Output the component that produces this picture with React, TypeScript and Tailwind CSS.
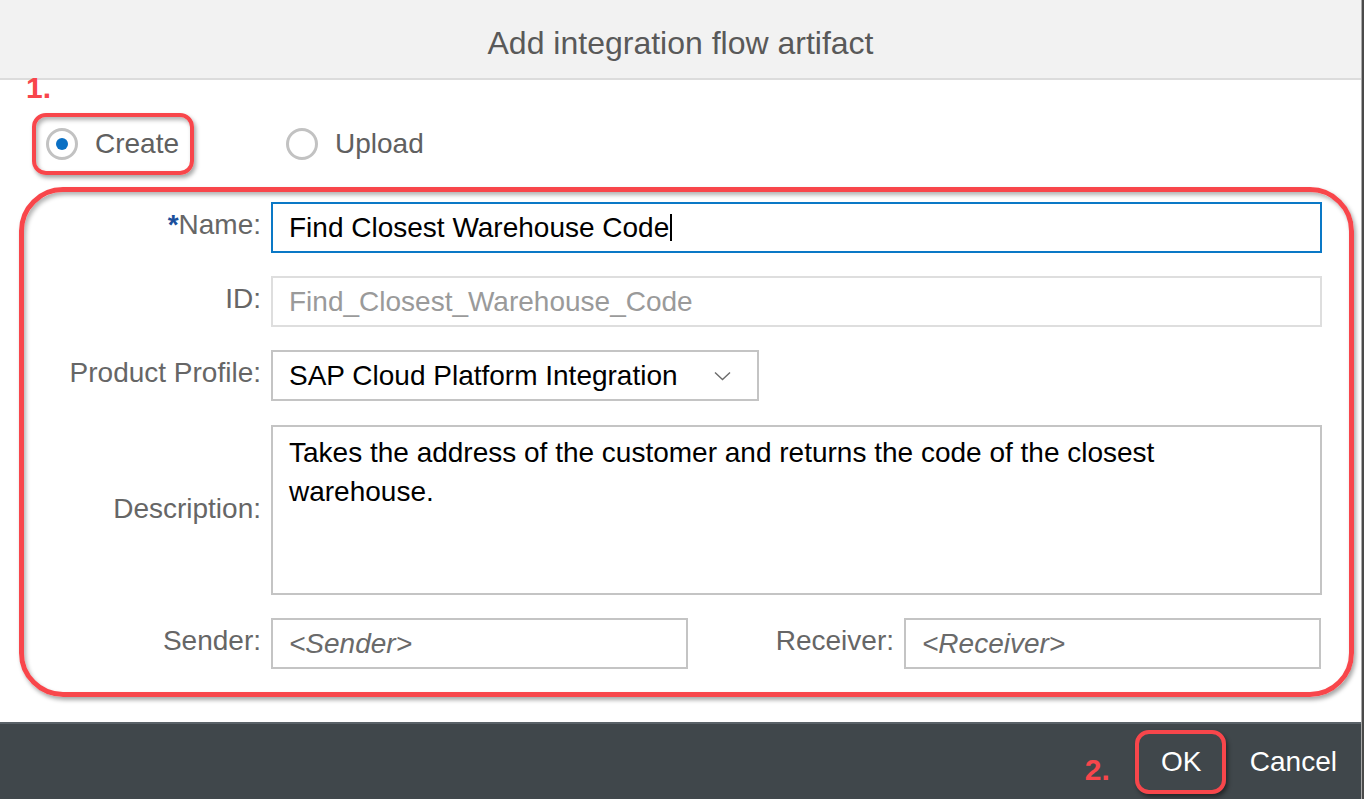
import React from "react";

const RED = "border-[#f8464b]";

function Radio({ checked }: { checked?: boolean }) {
  return (
    <span className="flex h-[32px] w-[32px] shrink-0 items-center justify-center rounded-full border-[3px] border-[#c2c2c2] bg-white">
      {checked && <span className="h-[12px] w-[12px] rounded-full bg-[#0a70c4]" />}
    </span>
  );
}

export default function App() {
  return (
    <div
      className="flex h-[799px] w-[1365px] overflow-hidden bg-white"
      style={{ fontFamily: '"Liberation Sans", Arial, sans-serif' }}
    >
      <div className="flex w-[1362px] flex-col border-r border-[#a8a8a8]">
        {/* Header */}
        <div className="flex h-[80px] shrink-0 items-center justify-center border-b-2 border-[#dcdcdc] bg-[#f2f2f2] pt-[8px]">
          <span className="text-[32px] text-[#595959]">Add integration flow artifact</span>
        </div>

        {/* Body */}
        <div className="relative flex flex-1 flex-col bg-white">
          <span className="absolute left-[26px] top-[-10px] text-[30px] font-bold leading-[36px] text-[#f8464b]">1.</span>

          {/* Radio row */}
          <div className="mt-[33px] flex h-[62px] items-center">
            <div
              className={`ml-[32px] flex h-[62px] w-[162px] items-center gap-[17px] rounded-[14px] border-4 ${RED} pl-[10px] shadow-[2px_3px_4px_rgba(0,0,0,0.35),inset_2px_3px_4px_rgba(0,0,0,0.3)]`}
            >
              <Radio checked />
              <span className="text-[28px] text-[#606060]">Create</span>
            </div>
            <div className="ml-[92px] flex items-center gap-[17px]">
              <Radio />
              <span className="text-[28px] text-[#606060]">Upload</span>
            </div>
          </div>

          {/* Form box */}
          <div
            className={`ml-[19px] mt-[12px] flex h-[510px] w-[1335px] flex-col rounded-[44px] border-[5px] ${RED} pt-[10px] shadow-[2px_3px_4px_rgba(0,0,0,0.35),inset_2px_3px_4px_rgba(0,0,0,0.3)]`}
          >
            {/* Name */}
            <div className="flex h-[51px] items-center">
              <div className="w-[237px] pb-[6px] text-right text-[28px] text-[#666]">
                <span className="font-bold text-[#1b4f9c]">*</span>Name:
              </div>
              <div className="ml-[10px] flex h-[51px] w-[1051px] items-center border-2 border-[#0a78c6] pl-[16px] text-[28px] text-black">
                Find Closest Warehouse Code
                <span className="ml-[1px] h-[27px] w-[2px] bg-black" />
              </div>
            </div>

            {/* ID */}
            <div className="mt-[23px] flex h-[51px] items-center">
              <div className="w-[237px] pb-[6px] text-right text-[28px] text-[#666]">ID:</div>
              <div className="ml-[10px] flex h-[51px] w-[1051px] items-center border-2 border-[#dedede] pl-[16px] text-[28px] text-[#9a9a9a]">
                Find_Closest_Warehouse_Code
              </div>
            </div>

            {/* Product profile */}
            <div className="mt-[23px] flex h-[51px] items-center">
              <div className="w-[237px] pb-[6px] text-right text-[28px] text-[#666]">Product Profile:</div>
              <div className="ml-[10px] flex h-[51px] w-[488px] items-center justify-between border-2 border-[#c4c4c4] pl-[16px] pr-[26px] text-[28px] text-black">
                <span>SAP Cloud Platform Integration</span>
                <svg width="17" height="10" viewBox="0 0 17 10" fill="none">
                  <path d="M1 1.5 L8.5 8.5 L16 1.5" stroke="#6b6b6b" strokeWidth="1.4" />
                </svg>
              </div>
            </div>

            {/* Description */}
            <div className="mt-[24px] flex h-[170px] items-center">
              <div className="w-[237px] pb-[2px] text-right text-[28px] text-[#666]">Description:</div>
              <div className="ml-[10px] h-[170px] w-[1051px] self-start border-2 border-[#c4c4c4] pl-[16px] pt-[6px] text-[28px] leading-[39px] text-black">
                Takes the address of the customer and returns the code of the closest
                <br />
                warehouse.
              </div>
            </div>

            {/* Sender / Receiver */}
            <div className="mt-[23px] flex h-[51px] items-center pr-[28px]">
              <div className="w-[237px] pb-[6px] text-right text-[28px] text-[#666]">Sender:</div>
              <div className="ml-[10px] flex h-[51px] w-[417px] items-center border-2 border-[#c4c4c4] pl-[16px] text-[28px] italic text-[#6a6a6a]">
                &lt;Sender&gt;
              </div>
              <div className="flex-1 pb-[6px] text-right text-[28px] text-[#666]">Receiver:</div>
              <div className="ml-[10px] flex h-[51px] w-[417px] items-center border-2 border-[#c4c4c4] pl-[16px] text-[28px] italic text-[#6a6a6a]">
                &lt;Receiver&gt;
              </div>
            </div>
          </div>
        </div>

        {/* Footer */}
        <div className="flex h-[77px] shrink-0 items-center justify-end border-t-2 border-[#5a6268] bg-[#40474b] pr-[24px]">
          <span className="mr-[25px] mt-[16px] text-[30px] font-bold text-[#f8464b]">2.</span>
          <div
            className={`flex h-[64px] w-[91px] items-center justify-center rounded-[14px] border-4 ${RED} pl-[2px] shadow-[2px_3px_4px_rgba(0,0,0,0.45)]`}
          >
            <span className="text-[28px] text-white">OK</span>
          </div>
          <span className="ml-[24px] text-[28px] text-white">Cancel</span>
        </div>
      </div>
      <div className="w-[2px] bg-[#4a4a4a]" />
    </div>
  );
}
